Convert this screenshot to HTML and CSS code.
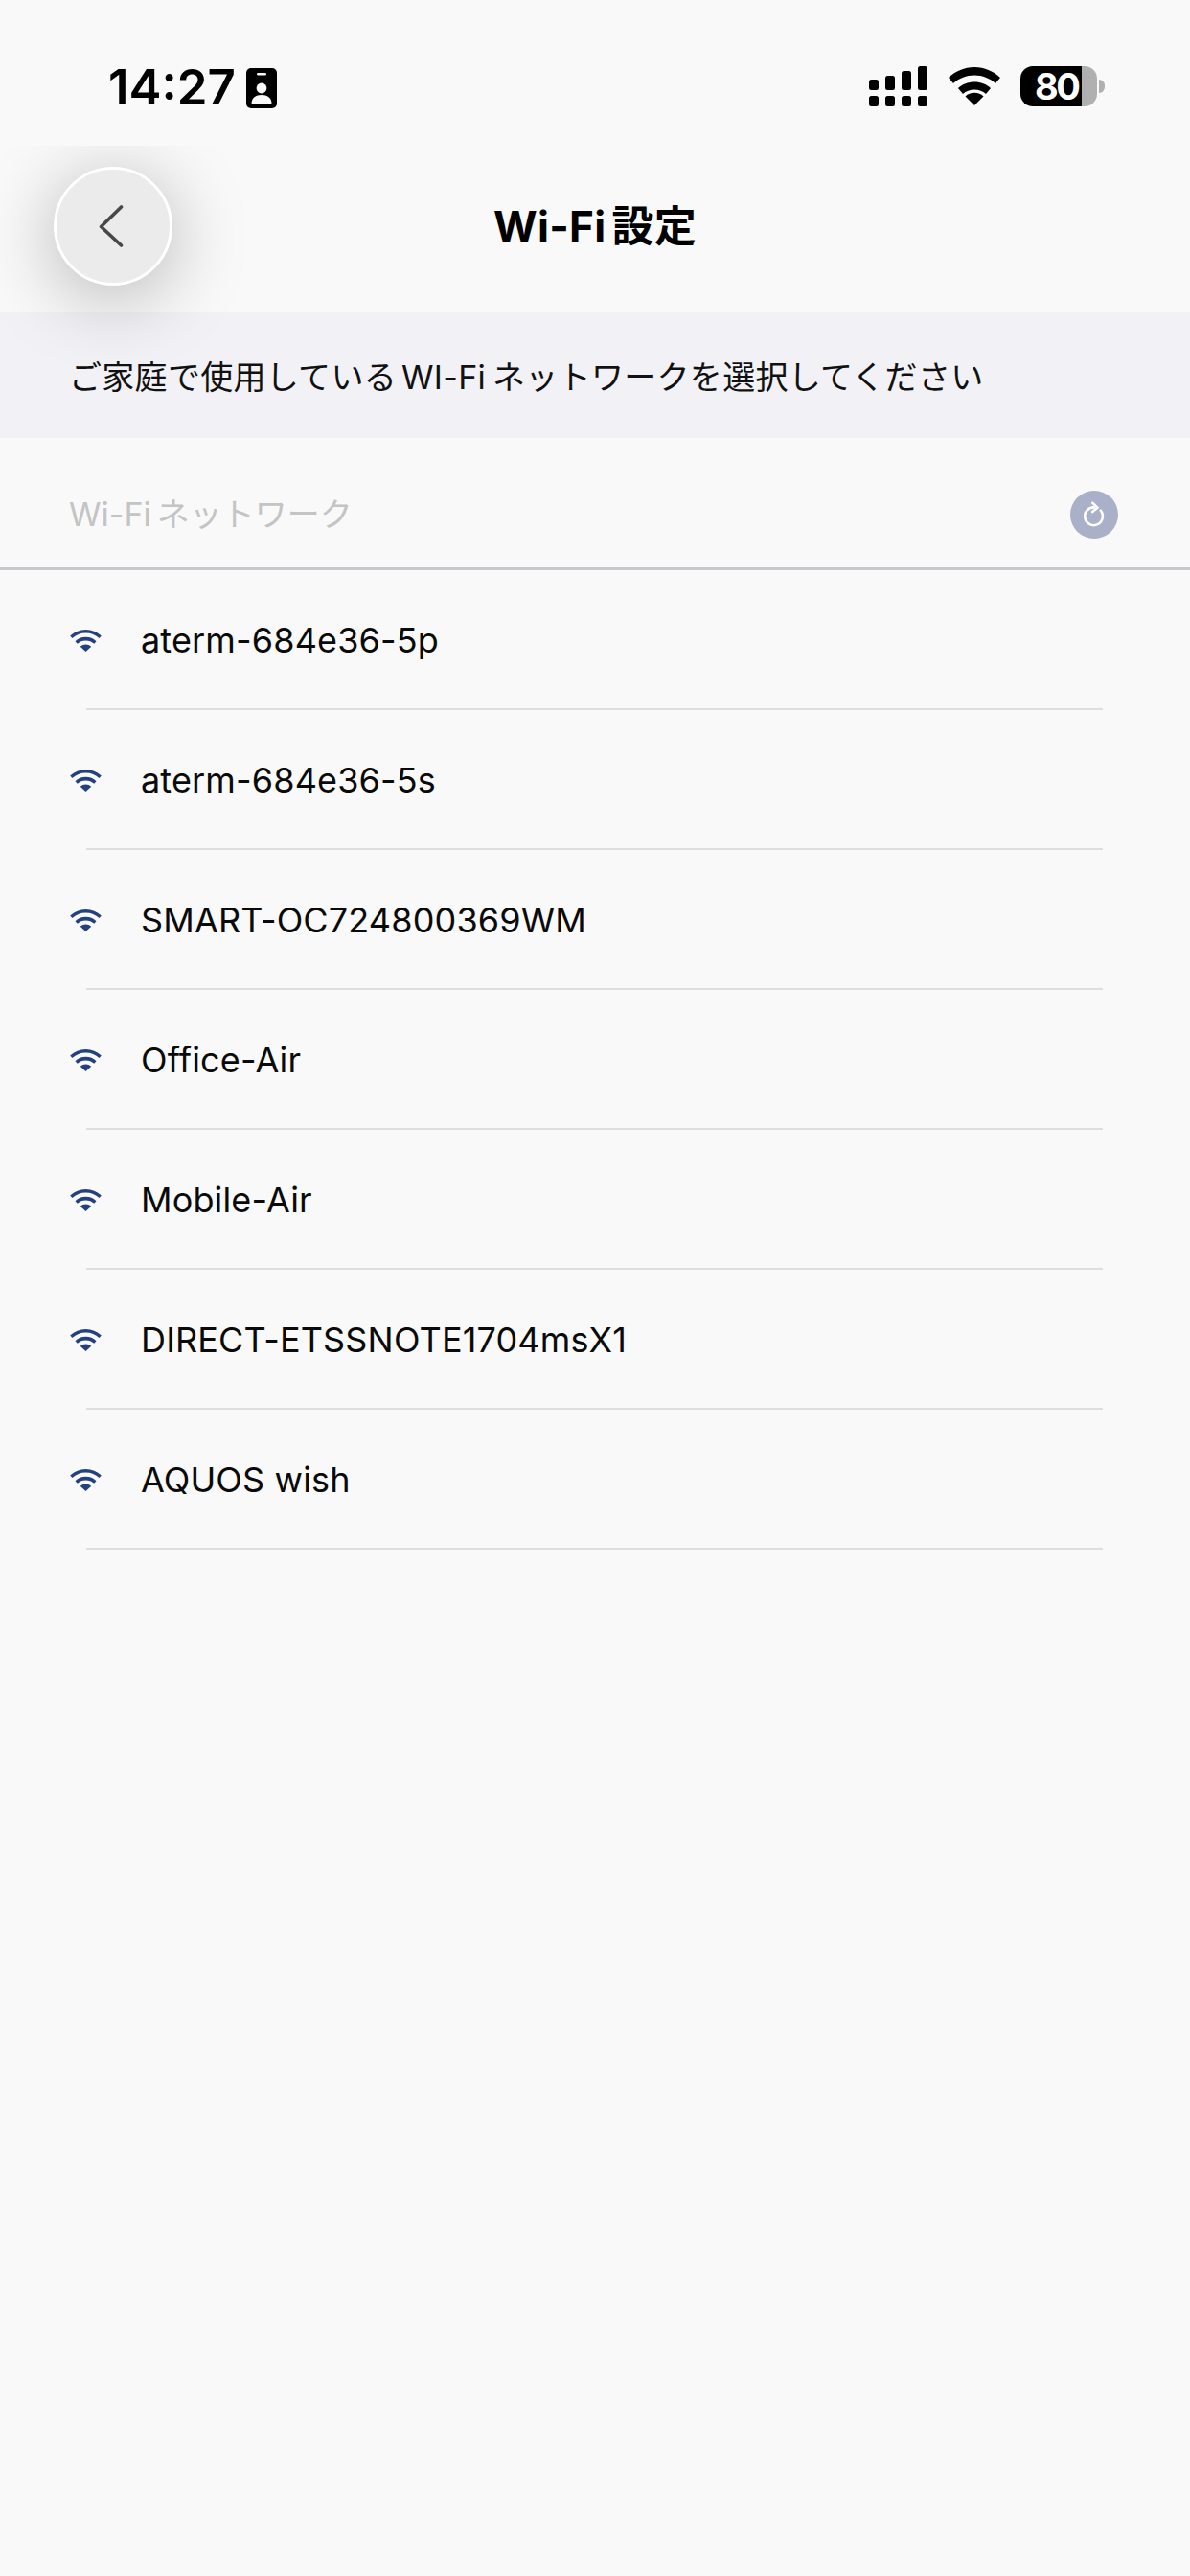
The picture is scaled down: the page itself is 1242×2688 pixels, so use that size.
FILE: index.html
```html
<!DOCTYPE html>
<html lang="ja">
<head>
<meta charset="utf-8">
<title>Wi-Fi設定</title>
<link rel="stylesheet" href="styles.css">
</head>
<body>
<div class="status">
  <div class="status-left">
    <span class="time">14:27</span>
    <svg class="badge" viewBox="0 0 32 42"><rect width="32" height="42" rx="5" fill="#000"/><rect x="11" y="5" width="10" height="2.4" rx="1.2" fill="#f9f9f9"/><circle cx="16" cy="21" r="5.4" fill="#f9f9f9"/><path d="M5.5 37c0-6 4.500-9 10.500-9s10.500 3 10.500 9z" fill="#f9f9f9"/></svg>
  </div>
  <div class="status-right">
    <svg class="signal" viewBox="0 0 61 42"><rect x="0" y="14" width="10" height="11" rx="2.500"/><rect x="17" y="10" width="10" height="15" rx="2.500"/><rect x="34" y="5" width="10" height="20" rx="2.500"/><rect x="51" y="0" width="10" height="25" rx="2.500"/><rect x="0" y="31" width="10" height="11" rx="2.500"/><rect x="17" y="31" width="10" height="11" rx="2.500"/><rect x="34" y="31" width="10" height="11" rx="2.500"/><rect x="51" y="31" width="10" height="11" rx="2.500"/></svg>
    <svg class="wifi-status" viewBox="0 0 54 40"><path d="M27 40 17.500 30.500a14 14 0 0 1 19 0z"/><path d="M27 0C16.500 0 7.500 4 0 11l5 6C11 11.500 18.500 8.500 27 8.500s16 3 22 8.500l5-6C46.500 4 37.500 0 27 0z"/><path d="M27 15.500c-6.500 0-12.500 2.300-17 6.500l5 6c3.300-3 7.300-4.500 12-4.500s8.700 1.500 12 4.500l5-6c-4.500-4.200-10.500-6.500-17-6.500z"/></svg>
    <div class="battery"><div class="battery-body"><span class="battery-text">80</span></div><div class="battery-tip"></div></div>
  </div>
</div>

<header class="nav">
  <div class="nav-left">
    <button class="back" aria-label="戻る"><svg viewBox="0 0 26 44" class="chev"><path d="M23.500 2 2.500 22.500l21 19.500" fill="none" stroke="#484848" stroke-width="3.600" stroke-linecap="round" stroke-linejoin="round"/></svg></button>
  </div>
  <h1 class="title"><span class="latin-end">Wi-Fi</span>設定</h1>
  <div></div>
</header>

<div class="banner"><span>ご家庭で使用している<span class="latin">WI-Fi</span>ネットワークを選択してください</span></div>

<div class="section">
  <span class="section-label"><span class="latin-end">Wi-Fi</span>ネットワーク</span>
  <span class="refresh"><svg viewBox="0 0 24 24" class="refresh-icon"><path d="M17.700 8.300A8 8 0 1 1 12 5.500" fill="none" stroke="#fff" stroke-width="2.200" stroke-linecap="round"/><path d="M10.500 1.500 15 5.700 10.500 9.500" fill="none" stroke="#fff" stroke-width="2.200" stroke-linecap="round" stroke-linejoin="round"/></svg></span>
</div>

<ul class="list">
  <li class="row"><svg class="wifi" viewBox="0 0 34 24"><use href="#w"/></svg><span>aterm-684e36-5p</span></li>
  <li class="row"><svg class="wifi" viewBox="0 0 34 24"><use href="#w"/></svg><span>aterm-684e36-5s</span></li>
  <li class="row"><svg class="wifi" viewBox="0 0 34 24"><use href="#w"/></svg><span>SMART-OC724800369WM</span></li>
  <li class="row"><svg class="wifi" viewBox="0 0 34 24"><use href="#w"/></svg><span>Office-Air</span></li>
  <li class="row"><svg class="wifi" viewBox="0 0 34 24"><use href="#w"/></svg><span>Mobile-Air</span></li>
  <li class="row"><svg class="wifi" viewBox="0 0 34 24"><use href="#w"/></svg><span>DIRECT-ETSSNOTE1704msX1</span></li>
  <li class="row"><svg class="wifi" viewBox="0 0 34 24"><use href="#w"/></svg><span>AQUOS wish</span></li>
</ul>

<svg class="defs" width="0" height="0"><defs><g id="w" fill="#24407f"><path d="M17 24 11 18.500a9 9 0 0 1 12 0z"/><path d="M17 0C10.500 0 4.800 2.400 0 6.800l2.300 2.700C6.300 5.800 11.300 3.700 17 3.700s10.700 2.100 14.700 5.800L34 6.800C29.200 2.400 23.500 0 17 0z"/><path d="M17 8.200c-4.500 0-8.400 1.600-11.500 4.500l2.400 2.700c2.500-2.300 5.500-3.500 9.100-3.500s6.600 1.200 9.100 3.500l2.400-2.700C25.400 9.800 21.500 8.200 17 8.200z"/></g></defs></svg>
</body>
</html>
```
FILE: styles.css
```css
* { box-sizing: border-box; }
html, body { margin: 0; padding: 0; }
body {
  width: 1242px;
  height: 2688px;
  background: #f9f9f9;
  color: #000;
  font-family: Inter, "Noto Sans CJK JP", sans-serif;
}
.status {
  position: relative;
  z-index: 2;
  height: 152px;
  background: #f9f9f9;
  display: flex;
  justify-content: space-between;
  align-items: flex-start;
  padding: 62px 89px 0 113px;
}
.status-left { display: flex; align-items: center; gap: 11px; }
.time { font-size: 51px; font-weight: 600; line-height: 58px; }
.badge { width: 32px; height: 42px; display: block; margin-top: 2px; }
.status-right { display: flex; align-items: flex-start; padding-top: 7px; }
.signal { width: 61px; height: 42px; display: block; margin-right: 22px; }
.wifi-status { width: 54px; height: 40px; display: block; margin: 1px 21px 0 0; }
.battery { display: flex; align-items: center; }
.battery-body {
  width: 80px;
  height: 42px;
  border-radius: 13px;
  background: linear-gradient(to right, #000 64px, #b0b0b0 64px);
  padding-left: 15px;
}
.battery-text { display: block; color: #fff; font-size: 38px; font-weight: 700; line-height: 42px; letter-spacing: -2.500px; white-space: nowrap; }
.battery-tip { width: 6px; height: 14px; border-radius: 0 7px 7px 0; background: #b0b0b0; margin-left: 2px; }

.nav {
  position: relative;
  z-index: 1;
  height: 174px;
  padding-bottom: 6px;
  display: grid;
  grid-template-columns: 1fr auto 1fr;
  align-items: center;
}
.nav-left { padding-left: 56px; display: flex; }
.back {
  width: 124px;
  height: 124px;
  border-radius: 50%;
  border: 3px solid #fff;
  background: #ebebeb;
  box-shadow: 0 12px 80px rgba(0, 0, 0, 0.28);
  padding: 0;
  display: flex;
  align-items: center;
  justify-content: center;
}
.chev { width: 26px; height: 44px; display: block; margin-left: -4px; }
.title { margin: 0; font-size: 44px; font-weight: 700; line-height: 60px; letter-spacing: 0.3px; }
.title .latin-end { margin-right: 6px; }

.banner {
  height: 131px;
  background: #f2f2f6;
  padding-left: 72px;
  display: flex;
  align-items: center;
  font-size: 34px;
  letter-spacing: 0.3px;
  color: #111;
}
.latin { margin: 0 7px 0 5px; }
.section {
  height: 138px;
  border-bottom: 3px solid #c8c7cc;
  padding: 24px 75px 0 72px;
  display: flex;
  align-items: center;
  justify-content: space-between;
}
.section-label { font-size: 34px; color: #c4c4c4; margin-top: -4px; }
.section-label .latin-end { margin-right: 6px; }
.refresh { width: 50px; height: 50px; border-radius: 50%; background: #a9b0c8; display: flex; align-items: center; justify-content: center; }
.refresh-icon { width: 28px; height: 28px; display: block; }

.list { list-style: none; margin: 0; padding: 0; }
.row {
  position: relative;
  height: 146px;
  display: flex;
  align-items: center;
  gap: 41px;
  padding-left: 73px;
  font-size: 36px;
  letter-spacing: 0.15px;
  color: #0a0a0a;
}
.row::after {
  content: "";
  position: absolute;
  left: 90px;
  right: 91px;
  bottom: 0;
  height: 2px;
  background: #dedede;
}
.wifi { width: 33px; height: 23px; display: block; }
.defs { position: absolute; }
```
